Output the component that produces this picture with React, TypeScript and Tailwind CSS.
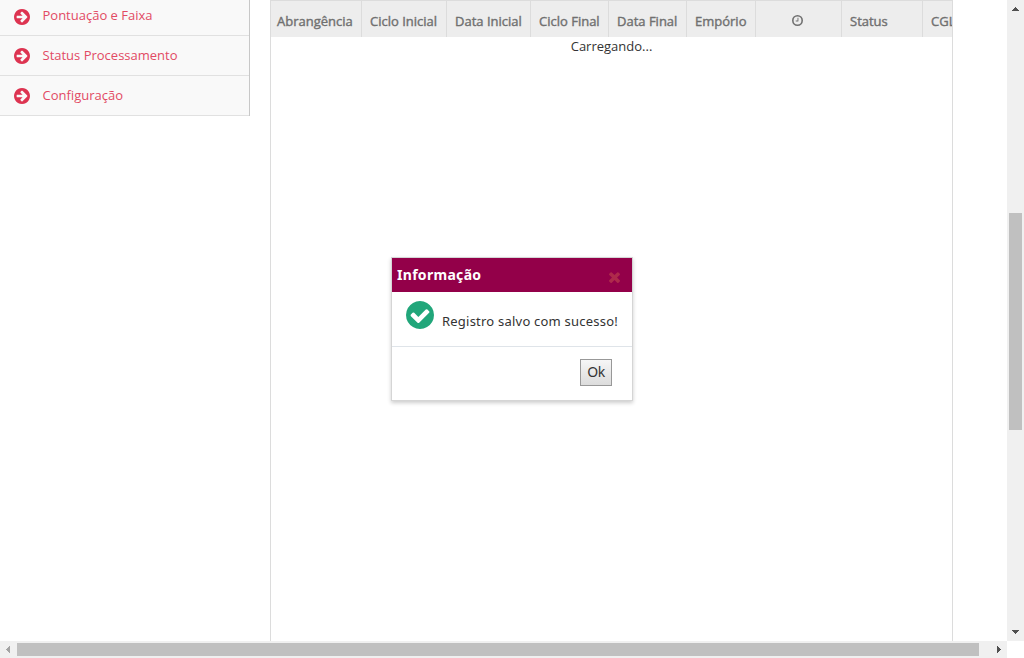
const CIRCLE =
  'M1664 896q0 209-103 385.5t-279.5 279.5-385.5 103-385.5-103-279.5-279.5-103-385.5 103-385.5 279.5-279.5 385.5-103 385.5 103 279.5 279.5 103 385.5z';
const ARROW =
  'M1413 896q0-27-18-45l-91-91-362-362q-18-18-45-18t-45 18l-91 91q-18 18-18 45t18 45l189 189h-502q-26 0-45 19t-19 45v128q0 26 19 45t45 19h502l-189 189q-19 19-19 45t19 45l91 91q18 18 45 18t45-18l362-362 91-91q18-18 18-45z';
const CHECK =
  'M1412 734q0-28-18-46l-91-90q-19-19-45-19t-45 19l-408 407-226-226q-19-19-45-19t-45 19l-91 90q-18 18-18 46 0 27 18 45l362 362q19 19 45 19 27 0 46-19l543-543q18-18 18-45z';
const TIMES =
  'M1490 1322q0 40-28 68l-136 136q-28 28-68 28t-68-28l-294-294-294 294q-28 28-68 28t-68-28l-136-136q-28-28-28-68t28-68l294-294-294-294q-28-28-28-68t28-68l136-136q28-28 68-28t68 28l294 294 294-294q28-28 68-28t68 28l136 136q28 28 28 68t-28 68l-294 294 294 294q28 28 28 68z';
const HAND =
  'M1024 544v448q0 14-9 23t-23 9h-320q-14 0-23-9t-9-23v-64q0-14 9-23t23-9h224v-352q0-14 9-23t23-9h64q14 0 23 9t9 23z';

function Icon({ d, className }: { d: string; className: string }) {
  return (
    <svg viewBox="128 128 1536 1536" className={className} fill="currentColor" fillRule="evenodd" aria-hidden="true">
      <path d={d} />
    </svg>
  );
}

function ClockIcon() {
  return (
    <svg viewBox="128 128 1536 1536" className="mb-[2px] size-[11px]" aria-hidden="true">
      <circle cx="896" cy="896" r="656" fill="none" stroke="currentColor" strokeWidth="224" />
      <path d={HAND} fill="currentColor" stroke="none" />
    </svg>
  );
}

const menu = ['Pontuação e Faixa', 'Status Processamento', 'Configuração'];

const columns = [
  { label: 'Abrangência', cell: 'w-[91px] pl-[6px]' },
  { label: 'Ciclo Inicial', cell: 'w-[85px] pl-2' },
  { label: 'Data Inicial', cell: 'w-[84px] pl-2' },
  { label: 'Ciclo Final', cell: 'w-[78px] pl-2' },
  { label: 'Data Final', cell: 'w-[78px] pl-2' },
  { label: 'Empório', cell: 'w-[69px] pl-2' },
  { label: '', cell: 'w-[86px] pl-9' },
  { label: 'Status', cell: 'w-[81px] pl-2' },
  { label: 'CGL', cell: 'w-[85px] pl-2' },
];

export default function App() {
  return (
    <div className="relative grid h-[658px] w-[1024px] grid-cols-[1007px_17px] grid-rows-[641px_17px] overflow-hidden bg-white font-['Open_Sans',sans-serif]">
      <div className="flex overflow-hidden">
        <nav className="h-[116px] w-[250px] shrink-0 border-r border-[#c8c8c8] bg-[#f9f9f9]">
          {menu.map((label, i) => (
            <a
              key={label}
              className={`flex items-center border-b border-[#e1e1e1] pl-[14px] text-[13px] text-[#e24a64] ${i === 0 ? 'h-9 pb-[3px]' : 'h-10'}`}
            >
              <Icon d={ARROW + CIRCLE} className="mt-px size-4 text-[#dd3451]" />
              <span className="ml-[12.5px] whitespace-nowrap">{label}</span>
            </a>
          ))}
        </nav>
        <main className="ml-5 w-[683px] overflow-hidden border-x border-t border-[#dcdcdc]">
          <div className="flex h-9 w-[760px] bg-[#ededed]">
            {columns.map((c, i) => (
              <div
                key={i}
                className={`flex shrink-0 items-center border-r border-[#dcdcdc] pt-[5px] text-[13px] whitespace-nowrap text-[#707070] [-webkit-text-stroke:0.4px_#707070] ${c.cell}`}
              >
                {c.label || <ClockIcon />}
              </div>
            ))}
          </div>
          <p className="h-5 text-center text-[13px] leading-[19px] text-[#333]">Carregando...</p>
        </main>
      </div>

      <div className="flex flex-col bg-[#f0f0f0]">
        <svg viewBox="0 0 17 17" className="h-[17px] w-[17px]" fill="#505050" shapeRendering="crispEdges">
          <path d="M5 11h7v-1h-1v-1h-1v-1h-1v-1h-1v1h-1v1h-1v1h-1z" />
        </svg>
        <div className="mt-[196px] ml-[2px] h-[217px] w-[13px] bg-[#c0c0c0]" />
        <svg viewBox="0 0 17 17" className="mt-auto h-[17px] w-[17px]" fill="#505050" shapeRendering="crispEdges">
          <path d="M5 6h7v1h-1v1h-1v1h-1v1h-1v-1h-1v-1h-1v-1h-1z" />
        </svg>
      </div>

      <div className="flex items-start bg-[#f0f0f0]">
        <svg viewBox="0 0 17 17" className="h-[17px] w-[17px]" fill="#a3a3a3" shapeRendering="crispEdges">
          <path d="M10 5v7h-1v-1h-1v-1h-1v-1h-1v-1h1v-1h1v-1h1v-1z" />
        </svg>
        <div className="mt-[2px] h-[13px] w-[962px] bg-[#c0c0c0]" />
        <svg viewBox="0 0 17 17" className="ml-auto h-[17px] w-[17px]" fill="#505050" shapeRendering="crispEdges">
          <path d="M7 5v7h1v-1h1v-1h1v-1h1v-1h-1v-1h-1v-1h-1v-1z" />
        </svg>
      </div>
      <div className="bg-white" />

      <section
        role="dialog"
        className="absolute top-[257px] left-[391px] flex h-[144px] w-[242px] flex-col border border-[#d5d5d5] bg-white font-['Noto_Sans',sans-serif] shadow-[0_2px_4px_rgba(0,0,0,0.2)]"
      >
        <header className="flex h-[34px] items-center justify-between bg-[#930049] pr-3 pl-[5px] text-white">
          <h2 className="mb-[2px] text-[14px] font-bold tracking-[0.3px] whitespace-nowrap">Informação</h2>
          <svg viewBox="302 238 1188 1316" preserveAspectRatio="none" className="mt-[3px] h-3 w-[11px] text-[#ae2a4b]" fill="currentColor">
            <path d={TIMES} />
          </svg>
        </header>
        <div className="flex h-[55px] items-start border-b border-[#dfe4e9] pt-[9px] pl-[14px]">
          <Icon d={CHECK + CIRCLE} className="size-7 shrink-0 text-[#21a67a]" />
          <p className="mt-[10px] ml-2 text-[13px] leading-5 tracking-[0.22px] whitespace-nowrap text-[#333]">
            Registro salvo com sucesso!
          </p>
        </div>
        <footer className="flex justify-end pt-3 pr-5">
          <button className="flex h-[27px] w-8 items-center justify-center border border-[#989898] bg-linear-to-b from-[#f6f6f6] to-[#dcdcdc] pb-[2px] text-[14px] tracking-[-0.4px] text-[#333]">
            Ok
          </button>
        </footer>
      </section>
    </div>
  );
}
